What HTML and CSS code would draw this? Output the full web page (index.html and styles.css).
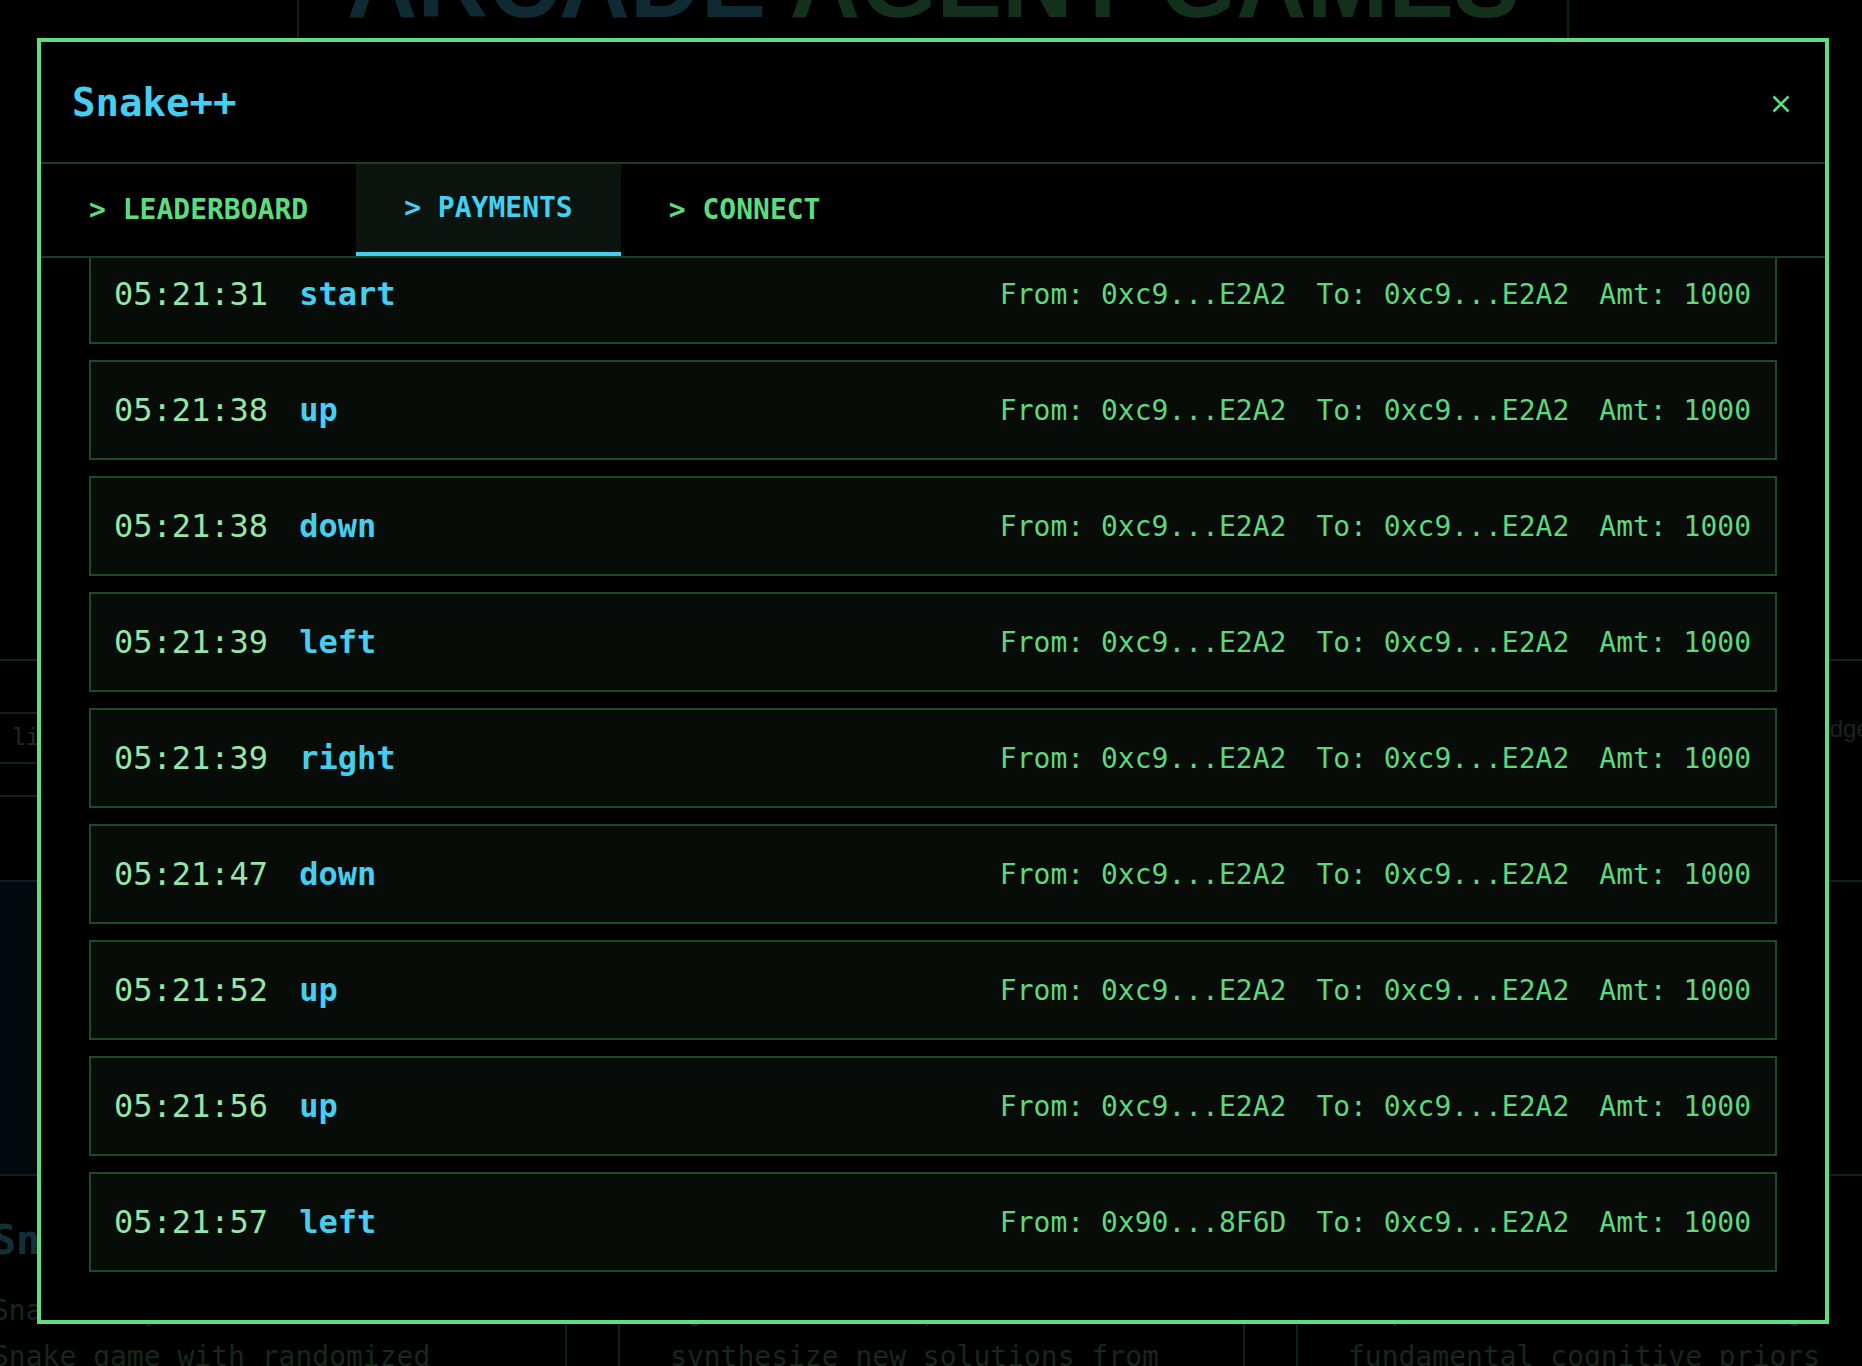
FILE: index.html
```html
<!DOCTYPE html>
<html lang="en">
<head>
<meta charset="utf-8">
<title>Snake++ — Payments</title>
<link rel="stylesheet" href="styles.css">
</head>
<body>
<div class="page">
  <header class="site-header">
    <h1 class="site-title"><span class="t-teal">ARCADE</span> <span class="t-green">AGENT GAMES</span></h1>
  </header>
  <section class="band">
    <div class="filter-box">
      <div class="search">live games</div>
      <div class="filter-extra"></div>
    </div>
    <div class="filter-label">Knowledge</div>
  </section>
  <section class="cards">
    <article class="card">
      <div class="preview"></div>
      <h3 class="card-title">Snake++</h3>
      <p class="card-sub">Snake++ by ARC Prize</p>
      <p class="card-desc">Snake game with randomized</p>
    </article>
    <article class="card">
      <div class="preview"></div>
      <h3 class="card-title">Compose</h3>
      <p class="card-sub">Agents must compose and</p>
      <p class="card-desc">synthesize new solutions from</p>
    </article>
    <article class="card">
      <div class="preview preview-dim"></div>
      <h3 class="card-title">Priors</h3>
      <p class="card-sub">Requires abstract reasoning</p>
      <p class="card-desc">fundamental cognitive priors</p>
    </article>
  </section>
</div>

<div class="modal" role="dialog" aria-labelledby="modal-title">
  <div class="modal-header">
    <h2 class="modal-title" id="modal-title">Snake++</h2>
    <button class="close" aria-label="Close">
      <svg width="18" height="18" viewBox="0 0 18 18"><path d="M1.5 1.5 L16.5 16.5 M16.5 1.5 L1.5 16.5" stroke="#5fdc7b" stroke-width="2.5" fill="none"/></svg>
    </button>
  </div>
  <nav class="tabs">
    <button class="tab">&gt; LEADERBOARD</button>
    <button class="tab active">&gt; PAYMENTS</button>
    <button class="tab">&gt; CONNECT</button>
  </nav>
  <div class="viewport">
    <ul class="list">
      <li class="row"><span class="time">05:21:31</span><span class="action">start</span><span class="details"><span>From: 0xc9...E2A2</span><span>To: 0xc9...E2A2</span><span>Amt: 1000</span></span></li>
      <li class="row"><span class="time">05:21:38</span><span class="action">up</span><span class="details"><span>From: 0xc9...E2A2</span><span>To: 0xc9...E2A2</span><span>Amt: 1000</span></span></li>
      <li class="row"><span class="time">05:21:38</span><span class="action">down</span><span class="details"><span>From: 0xc9...E2A2</span><span>To: 0xc9...E2A2</span><span>Amt: 1000</span></span></li>
      <li class="row"><span class="time">05:21:39</span><span class="action">left</span><span class="details"><span>From: 0xc9...E2A2</span><span>To: 0xc9...E2A2</span><span>Amt: 1000</span></span></li>
      <li class="row"><span class="time">05:21:39</span><span class="action">right</span><span class="details"><span>From: 0xc9...E2A2</span><span>To: 0xc9...E2A2</span><span>Amt: 1000</span></span></li>
      <li class="row"><span class="time">05:21:47</span><span class="action">down</span><span class="details"><span>From: 0xc9...E2A2</span><span>To: 0xc9...E2A2</span><span>Amt: 1000</span></span></li>
      <li class="row"><span class="time">05:21:52</span><span class="action">up</span><span class="details"><span>From: 0xc9...E2A2</span><span>To: 0xc9...E2A2</span><span>Amt: 1000</span></span></li>
      <li class="row"><span class="time">05:21:56</span><span class="action">up</span><span class="details"><span>From: 0xc9...E2A2</span><span>To: 0xc9...E2A2</span><span>Amt: 1000</span></span></li>
      <li class="row"><span class="time">05:21:57</span><span class="action">left</span><span class="details"><span>From: 0x90...8F6D</span><span>To: 0xc9...E2A2</span><span>Amt: 1000</span></span></li>
    </ul>
  </div>
</div>
</body>
</html>
```

FILE: styles.css
```css
* { box-sizing: border-box; }

html, body {
  margin: 0;
  background: #000;
}

body {
  width: 1862px;
  height: 1366px;
  overflow: hidden;
  font-family: "DejaVu Sans Mono", monospace;
}

/* ---------- background page ---------- */
.page {
  width: 1862px;
  height: 1366px;
  overflow: hidden;
}

.site-header {
  margin-left: 297px;
  width: 1272px;
  height: 38px;
  border-left: 2px solid #0e2215;
  border-right: 2px solid #0e2215;
  overflow: hidden;
}

.site-title {
  margin: -66px 0 0;
  font: bold 98px/1 "Liberation Sans", sans-serif;
  text-align: center;
  white-space: nowrap;
}

.t-teal { color: #0f2a33; }
.t-green { color: #13301c; }

.band {
  margin-top: 621px;
  border-top: 2px solid #0e2215;
  display: flex;
  align-items: flex-start;
}

.filter-box {
  width: 1751px;
  flex-shrink: 0;
  margin-top: 51px;
  border-top: 2px solid #0e2215;
}

.search {
  height: 50px;
  display: flex;
  align-items: center;
  padding-left: 11px;
  border-bottom: 2px solid #0e2215;
  font: 24px "Liberation Mono", monospace;
  color: #12301c;
}

.filter-extra {
  height: 33px;
  border-bottom: 2px solid #0e2215;
}

.filter-label {
  padding-top: 56px;
  font: 24px/1 "Liberation Sans", sans-serif;
  color: #17251c;
  white-space: nowrap;
}

.cards {
  display: grid;
  grid-template-columns: repeat(3, 627px);
  column-gap: 51px;
  margin-left: -60px;
  margin-top: 83px;
}

.card {
  border: 2px solid #0e2215;
  border-bottom: 0;
  height: 486px;
}

.preview {
  height: 294px;
  background: #04080f;
  border-bottom: 2px solid #0e2215;
}

.preview-dim {
  background: #000;
}

.card-title {
  margin: 40px 50px 0;
  font: bold 40px/1.2 "DejaVu Sans Mono", monospace;
  color: #11303a;
}

.card-sub,
.card-desc {
  font: 28px/1.2 "DejaVu Sans Mono", monospace;
  color: #17271c;
  white-space: nowrap;
}

.card-sub { margin: 30px 50px 0; }
.card-desc { margin: 12px 50px 0; }

/* ---------- modal ---------- */
.modal {
  position: fixed;
  left: 37px;
  top: 38px;
  width: 1792px;
  height: 1286px;
  border: 4px solid #62dc7d;
  background: #000;
  display: flex;
  flex-direction: column;
}

.modal-header {
  height: 122px;
  flex-shrink: 0;
  border-bottom: 2px solid #1c3b24;
  display: flex;
  align-items: center;
  justify-content: space-between;
  padding: 0 35px 0 31px;
}

.modal-title {
  margin: 0;
  font: bold 39px/1 "DejaVu Sans Mono", monospace;
  color: #46cef0;
}

.close {
  width: 18px;
  height: 18px;
  padding: 0;
  margin-top: 4px;
  border: 0;
  background: none;
  display: block;
}

.close svg { display: block; }

.tabs {
  height: 94px;
  flex-shrink: 0;
  border-bottom: 2px solid #1c3b24;
  display: flex;
}

.tab {
  display: flex;
  align-items: center;
  padding: 0 48px;
  margin: 0;
  border: 0;
  border-radius: 0;
  background: none;
  font: bold 28px/1 "DejaVu Sans Mono", monospace;
  color: #5edb7c;
  white-space: pre;
}

.tab.active {
  background: #0b140e;
  color: #46cef0;
  border-bottom: 4px solid #46cef0;
}

.viewport {
  flex: 1;
  min-height: 0;
  overflow: hidden;
  padding: 0 48px 48px;
}

.list {
  margin: -14px 0 0;
  padding: 0;
  list-style: none;
  display: flex;
  flex-direction: column;
  gap: 16px;
}

.row {
  height: 100px;
  flex-shrink: 0;
  border: 2px solid #1e4929;
  background: #070c09;
  display: flex;
  align-items: center;
  padding: 0 24px 0 23px;
  white-space: pre;
}

.time {
  font-size: 32px;
  color: #97e5a7;
}

.action {
  margin-left: 31px;
  font-size: 32px;
  font-weight: bold;
  color: #46cef0;
}

.details {
  margin-left: auto;
  display: flex;
  gap: 30px;
  font-size: 28px;
  color: #5ed77d;
}
```
